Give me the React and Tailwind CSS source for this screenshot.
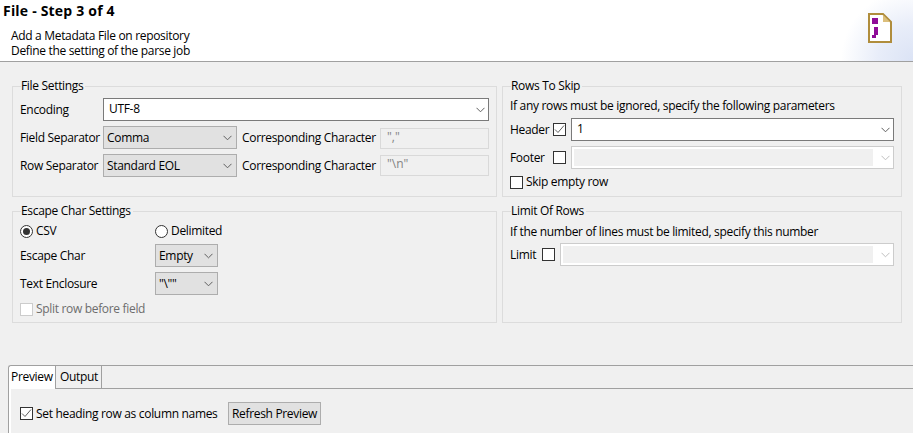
import React from "react";

const Chevron = ({ color = "#606060" }) => (
  <svg width="9" height="6" viewBox="0 0 9 6" fill="none" className="shrink-0">
    <path d="M0.5 0.8 L4.5 4.8 L8.5 0.8" stroke={color} strokeWidth="1" />
  </svg>
);

const Combo = ({ value, className = "" }) => (
  <div className={`flex items-center justify-between h-[23px] border border-[#adadad] bg-[#e1e1e1] pl-[3px] pr-[4px] ${className}`}>
    <span>{value}</span>
    <Chevron />
  </div>
);

const WhiteCombo = ({ value, className = "" }) => (
  <div className={`flex items-center justify-between h-[23px] border border-[#7a7a7a] bg-white pl-[5px] pr-[3px] ${className}`}>
    <span className="-mt-[1px]">{value}</span>
    <Chevron />
  </div>
);

const DisabledCombo = ({ className = "" }) => (
  <div className={`flex items-center h-[23px] border border-[#cccccc] bg-white p-[2px] pr-[3px] ${className}`}>
    <div className="flex-1 h-full bg-[#f0f0f0]" />
    <div className="w-[17px] flex justify-end">
      <Chevron color="#bfbfbf" />
    </div>
  </div>
);

const Check = ({ checked, disabled }) => (
  <div className={`w-[13px] h-[13px] shrink-0 border flex items-center justify-center ${disabled ? "border-[#cccccc] bg-white" : "border-[#333333] bg-white"}`}>
    {checked && (
      <svg width="11" height="11" viewBox="0 0 11 11" fill="none">
        <path d="M1 5.5 L4 8.5 L10 1.5" stroke="#606060" strokeWidth="1" />
      </svg>
    )}
  </div>
);

const Radio = ({ checked }) => (
  <div className="w-[13px] h-[13px] shrink-0 rounded-full border border-[#333333] bg-white flex items-center justify-center">
    {checked && <div className="w-[7px] h-[7px] rounded-full bg-[#333333]" />}
  </div>
);

const Group = ({ title, children }) => (
  <fieldset className="border border-[#dcdcdc] min-w-0">
    <legend className="ml-[8px] h-[16px] leading-[16px] pr-[2px]">{title}</legend>
    {children}
  </fieldset>
);

const CornerIcon = () => (
  <svg width="24" height="31" viewBox="0 0 24 31" className="shrink-0">
    <path d="M1 1 H15 L23 9 V29 H1 Z" fill="white" stroke="#b08d3c" strokeWidth="2" />
    <path d="M15 2 L22 9 H15 Z" fill="#dcbf7c" />
    <path d="M4 5 H10 V11 H4 Z M6 14 H10 V22 H8 V25 H4 V22 H6 Z" fill="#8f0d97" />
  </svg>
);

const Row = ({ label, value, chr, inputClass = "" }) => (
  <div className="flex items-center h-[23px]">
    <span className="w-[83px] whitespace-nowrap">{label}</span>
    <Combo value={value} className="w-[134px]" />
    <span className="w-[143px] pl-[5px] whitespace-nowrap">Corresponding Character</span>
    <div className={`w-[109px] h-[21px] border border-[#d9d9d9] pl-[6px] text-[#848484] tracking-normal ${inputClass}`}>{chr}</div>
  </div>
);

export default function App() {
  return (
    <div className="w-[913px] h-[433px] overflow-hidden bg-[#f0f0f0] text-[12px] leading-[16px] text-black font-['Open_Sans','Noto_Sans',sans-serif] tracking-[-0.32px]">
      <header className="h-[62px] border-b border-[#a0a0a0] bg-[radial-gradient(circle_at_100%_100%,#dbe3f5_0px,#e8edf9_35px,#ffffff_72px)] flex justify-between pr-[21px]">
        <div>
          <h1 className="pl-[3px] pt-[2px] h-[28px] text-[14px] leading-[18px] font-bold tracking-[0.2px]">File - Step 3 of 4</h1>
          <p className="pl-[11px] leading-[15px]">Add a Metadata File on repository</p>
          <p className="pl-[11px] leading-[15px]">Define the setting of the parse job</p>
        </div>
        <div className="pt-[13px]">
          <CornerIcon />
        </div>
      </header>

      <div className="grid grid-cols-[485px_400px] grid-rows-[119px_120px] gap-x-[5px] gap-y-[6px] pl-[12px] pt-[16px]">
        <Group title="File Settings">
          <div className="px-[7px] pt-[4px] flex flex-col gap-[5px]">
            <div className="flex items-center">
              <span className="w-[83px]">Encoding</span>
              <WhiteCombo value="UTF-8" className="w-[386px]" />
            </div>
            <Row label="Field Separator" value="Comma" chr={'","'} inputClass="mt-[2px]" />
            <Row label="Row Separator" value="Standard EOL" chr={'"\\n"'} />
          </div>
        </Group>

        <Group title="Rows To Skip">
          <div className="px-[7px] pt-[4px]">
            <p className="h-[20px]">If any rows must be ignored, specify the following parameters</p>
            <div className="flex items-center">
              <span className="w-[43px]">Header</span>
              <Check checked />
              <WhiteCombo value="1" className="w-[323px] ml-[5px]" />
            </div>
            <div className="flex items-center mt-[5px]">
              <span className="w-[43px]">Footer</span>
              <Check />
              <DisabledCombo className="w-[323px] ml-[5px]" />
            </div>
            <div className="flex items-center gap-[3px] mt-[5px]">
              <Check />
              <span>Skip empty row</span>
            </div>
          </div>
        </Group>

        <Group title="Escape Char Settings">
          <div className="px-[7px] pt-[4px]">
            <div className="flex items-center h-[16px]">
              <div className="w-[135px] flex items-center gap-[3px]">
                <Radio checked />
                <span>CSV</span>
              </div>
              <div className="flex items-center gap-[3px]">
                <Radio />
                <span>Delimited</span>
              </div>
            </div>
            <div className="flex items-center mt-[5px]">
              <span className="w-[135px]">Escape Char</span>
              <Combo value="Empty" className="w-[63px]" />
            </div>
            <div className="flex items-center mt-[5px]">
              <span className="w-[135px]">Text Enclosure</span>
              <Combo value={'"\\""'} className="w-[63px]" />
            </div>
            <div className="flex items-center gap-[3px] mt-[6px] text-[#6d6d6d]">
              <Check disabled />
              <span>Split row before field</span>
            </div>
          </div>
        </Group>

        <Group title="Limit Of Rows">
          <div className="px-[7px] pt-[5px]">
            <p className="h-[19px]">If the number of lines must be limited, specify this number</p>
            <div className="flex items-center">
              <span className="w-[32px]">Limit</span>
              <Check />
              <DisabledCombo className="w-[334px] ml-[5px]" />
            </div>
          </div>
        </Group>
      </div>

      <section className="mt-[42px] ml-[8px] border-t border-l border-[#a0a0a0] h-[68px] rounded-tl-[3px]">
        <div className="flex h-[23px] border-b border-[#a0a0a0]">
          <div className="w-[47px] h-[23px] bg-white border-r border-[#a0a0a0] pl-[2px] leading-[22px] rounded-tl-[3px]">Preview</div>
          <div className="w-[46px] border-r border-[#a0a0a0] pl-[4px] leading-[22px]">Output</div>
        </div>
        <div className="h-[44px] border-l-2 border-white flex items-start pl-[9px] pt-[13px]">
          <div className="h-[23px] flex items-center">
            <Check checked />
            <span className="ml-[3px] w-[192px] whitespace-nowrap">Set heading row as column names</span>
          </div>
          <div className="w-[93px] h-[23px] border border-[#adadad] bg-[#e1e1e1] flex items-center justify-center whitespace-nowrap">Refresh Preview</div>
        </div>
      </section>
    </div>
  );
}
